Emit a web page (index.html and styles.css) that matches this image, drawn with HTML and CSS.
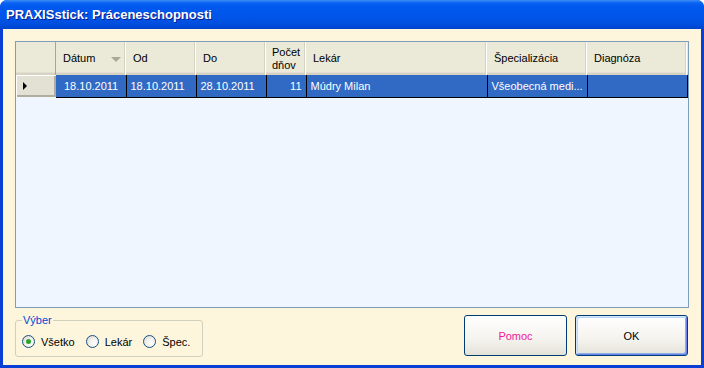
FILE: index.html
```html
<!DOCTYPE html>
<html>
    <head>
        <meta charset="utf-8">
        <title>PRAXISstick: Práceneschopnosti</title>
        <link rel="stylesheet" href="styles.css">
    </head>
    <body>
        <div class="window">
            <div class="titlebar">PRAXISstick: Práceneschopnosti</div>
            <div class="client">
                <div class="grid">
                    <table>
                        <colgroup>
                            <col class="c-rh">
                            <col class="c-70"><col class="c-70"><col class="c-70">
                            <col class="c-40"><col class="c-181">
                            <col class="c-100"><col class="c-100">
                            <col>
                        </colgroup>
                        <thead>
                            <tr>
                                <th class="rh"></th>
                                <th><span class="sorted">Dátum</span></th>
                                <th>Od</th>
                                <th>Do</th>
                                <th class="two">Počet<br>dňov</th>
                                <th>Lekár</th>
                                <th>Špecializácia</th>
                                <th>Diagnóza</th>
                                <th class="fill"></th>
                            </tr>
                        </thead>
                        <tbody>
                            <tr class="selected">
                                <td class="rh"><span class="arrow"></span></td>
                                <td class="first">18.10.2011</td>
                                <td>18.10.2011</td>
                                <td>28.10.2011</td>
                                <td class="num">11</td>
                                <td>Múdry Milan</td>
                                <td>Všeobecná medi...</td>
                                <td></td>
                                <td class="fill"></td>
                            </tr>
                        </tbody>
                    </table>
                </div>
                <div class="footer">
                    <fieldset class="choice">
                        <legend>Výber</legend>
                        <label class="radio checked"><span class="dot"></span>Všetko</label>
                        <label class="radio"><span class="dot"></span>Lekár</label>
                        <label class="radio"><span class="dot"></span>Špec.</label>
                    </fieldset>
                    <div class="buttons">
                        <button class="btn help">Pomoc</button>
                        <button class="btn ok">OK</button>
                    </div>
                </div>
            </div>
        </div>
    </body>
</html>
```

FILE: styles.css
```css
* {
    margin: 0;
    padding: 0;
    box-sizing: border-box;
}

body {
    width: 704px;
    height: 368px;
    overflow: hidden;
    font-family: "Liberation Sans", Arial, sans-serif;
    font-size: 11px;
    background: #fff;
}

.window {
    width: 704px;
    height: 368px;
    display: flex;
    flex-direction: column;
    background: #0a3fd6;
    border-radius: 7px 7px 0 0;
    overflow: hidden;
}

.titlebar {
    height: 29px;
    flex: none;
    padding: 7px 0 0 6px;
    color: #fff;
    font-weight: bold;
    font-size: 13px;
    text-shadow: 1px 1px #0a1a8a;
    background: linear-gradient(#3d8cf7 0, #0a62f2 3px, #0058ee 7px, #0055e8 18px, #004ddc 25px, #0043cc 29px);
}

.client {
    flex: 1;
    margin: 0 3px 3px 3px;
    background: #fdf6dc;
    padding: 12px 12px 0 12px;
    display: flex;
    flex-direction: column;
}

.grid {
    height: 267px;
    border: 1px solid #7f9db9;
    background: #eff6ff;
    overflow: hidden;
}

table {
    border-collapse: collapse;
    table-layout: fixed;
    width: 100%;
}

.c-rh { width: 40px; }
.c-70 { width: 70px; }
.c-40 { width: 40px; }
.c-181 { width: 181px; }
.c-100 { width: 100px; }

th {
    height: 33px;
    font-weight: normal;
    text-align: left;
    padding: 0 0 0 7px;
    background: #ebe9d8;
    box-shadow: inset -1px 0 #fff, inset -2px 0 #d5d2c3, inset 0 -2px #d6d3c2, inset 0 -3px #e2dfd0;
    white-space: nowrap;
    line-height: 13px;
    color: #000;
}

th.rh {
    box-shadow: inset -1px 0 #a7a595, inset 0 -2px #d6d3c2, inset 0 -3px #e2dfd0;
}

th.fill {
    box-shadow: inset 0 -2px #d6d3c2, inset 0 -3px #e2dfd0;
}

th.two {
    padding-left: 6px;
}

.sorted {
    display: block;
    position: relative;
}

.sorted::after {
    content: "";
    position: absolute;
    right: 5px;
    top: 5px;
    border-left: 5px solid transparent;
    border-right: 5px solid transparent;
    border-top: 5px solid #aca899;
}

td {
    height: 22px;
    padding: 0 0 0 4px;
    white-space: nowrap;
    overflow: hidden;
}

.selected td {
    background: #316ac5;
    color: #fff;
    border-right: 1px solid #000;
    border-bottom: 1px solid #000;
}

.selected td.first {
    padding-left: 8px;
}

.selected td.num {
    text-align: right;
    padding-right: 4px;
}

.selected td.fill {
    border: none;
    box-shadow: inset 0 -1px #000;
}

.selected td.rh {
    background: #e3e1d3;
    border: none;
    box-shadow: inset 1px 1px #fff, inset -2px -2px #b0ad9c;
    padding-left: 7px;
}

.arrow {
    display: block;
    width: 0;
    height: 0;
    border-top: 4px solid transparent;
    border-bottom: 4px solid transparent;
    border-left: 4px solid #000;
}

.footer {
    margin-top: 7px;
    display: flex;
    align-items: flex-start;
}

.choice {
    width: 188px;
    height: 43px;
    margin-top: -1px;
    border: 1px solid #d0d0bf;
    border-radius: 3px;
    padding: 8px 0 0 6px;
    display: flex;
    gap: 11px;
}

.choice legend {
    color: #0046d5;
    padding: 0 1px;
    margin-left: 0;
    font-size: 11px;
}

.radio {
    display: flex;
    align-items: center;
    gap: 6px;
    height: 15px;
}

.radio .dot {
    width: 13px;
    height: 13px;
    border: 1px solid #1c5180;
    border-radius: 50%;
    background: radial-gradient(circle at 65% 65%, #fff 0, #f1f0ec 45%, #d4d2c6 100%);
    display: flex;
    align-items: center;
    justify-content: center;
}

.radio.checked .dot::after {
    content: "";
    width: 5px;
    height: 5px;
    border-radius: 50%;
    background: #2aa52a;
}

.buttons {
    margin-left: auto;
    display: flex;
    gap: 8px;
    margin-right: 1px;
}

.btn {
    height: 41px;
    border: 1px solid #003c74;
    border-radius: 3px;
    background: linear-gradient(#fff, #f4f3ee 60%, #e4e2d8);
    font-family: "Liberation Sans", Arial, sans-serif;
    font-size: 11px;
    color: #000;
}

.btn.help {
    width: 103px;
    color: #f0169a;
}

.btn.ok {
    width: 113px;
    box-shadow: inset 1px 1px #cee7ff, inset -1px -1px #6982ee, inset 2px 2px #bcd4f6, inset -2px -2px #89ade4;
}
```
